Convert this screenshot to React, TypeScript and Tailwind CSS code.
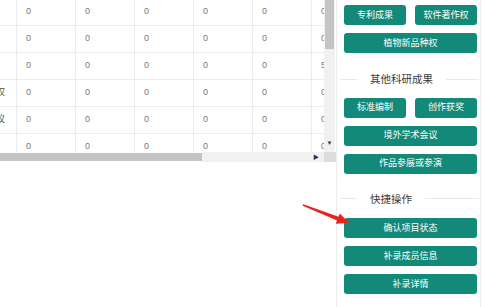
import React from 'react';

const font = { fontFamily: '"Liberation Sans", "Noto Sans CJK SC", sans-serif' };

const rows = [
  { name: '学术论文', vals: ['0', '0', '0', '0', '0', '0'] },
  { name: '学术专著', vals: ['0', '0', '0', '0', '0', '0'] },
  { name: '专利成果', vals: ['0', '0', '0', '0', '0', '5'] },
  { name: '植物新品种权', vals: ['0', '0', '0', '0', '0', '0'] },
  { name: '境外学术会议', vals: ['0', '0', '0', '0', '0', '0'] },
  { name: '标准编制', vals: ['0', '0', '0', '0', '0', '0'] },
];

function Btn({ children, full }: { children: React.ReactNode; full?: boolean }) {
  return (
    <button
      className={`h-[20px] rounded-[3px] bg-[#138a79] text-white text-[9px] leading-none flex items-center justify-center ${full ? 'w-full' : 'w-[62px]'}`}
    >
      {children}
    </button>
  );
}

function Divider({ title }: { title: string }) {
  return (
    <div className="flex items-center ml-[-4px] mr-[-2px]">
      <div className="w-[17px] h-px bg-[#e8e8e8]" />
      <span className="px-[13px] text-[10.5px] leading-none text-[#3a3a3a]">{title}</span>
      <div className="flex-1 h-px bg-[#e8e8e8]" />
    </div>
  );
}

export default function App() {
  return (
    <div className="relative w-[489px] h-[307px] overflow-hidden bg-white flex" style={font}>
      {/* table area, scrolled horizontally */}
      <div className="w-[336px] flex flex-col">
        <div className="flex h-[152px]">
          <div className="w-[324px] overflow-hidden">
            <div className="ml-[-55px] mt-[-1px]">
              {rows.map((r) => (
                <div key={r.name} className="flex h-[27px] border-b border-[#ececec]">
                  <div className="w-[72px] shrink-0 border-r border-[#ececec] pl-[6px] flex items-center text-[9px] text-[#555] whitespace-nowrap">
                    {r.name}
                  </div>
                  {r.vals.map((v, i) => (
                    <div
                      key={i}
                      className="w-[59px] shrink-0 border-r border-[#ececec] pl-[9px] flex items-center text-[9px] text-[#777]"
                    >
                      {v}
                    </div>
                  ))}
                </div>
              ))}
            </div>
          </div>
          {/* vertical scrollbar */}
          <div className="w-[11px] bg-[#f1f1f1] flex flex-col items-center">
            <div className="w-[9px] h-[49px] bg-[#c4c4c4]" />
            <div className="flex-1" />
            <div className="text-[6px] leading-none text-[#333] mb-[6px]">▼</div>
          </div>
        </div>
        {/* horizontal scrollbar */}
        <div className="flex h-[10px]">
          <div className="w-[202px] bg-[#c4c4c4] my-[1px]" />
          <div className="flex-1 bg-[#f1f1f1] flex items-center justify-end pr-[5px]">
            <span className="text-[6px] leading-none text-[#333]">▶</span>
          </div>
          <div className="w-[12px] bg-[#dcdcdc]" />
        </div>
      </div>

      {/* side panel */}
      <div className="w-[145px] border-l border-r border-[#ebebeb] pl-[7px] pr-[3px] pt-[5px] flex flex-col">
        <div className="flex justify-between">
          <Btn>专利成果</Btn>
          <Btn>软件著作权</Btn>
        </div>
        <div className="mt-[8px]">
          <Btn full>植物新品种权</Btn>
        </div>
        <div className="mt-[21px]">
          <Divider title="其他科研成果" />
        </div>
        <div className="mt-[13px] flex justify-between">
          <Btn>标准编制</Btn>
          <Btn>创作获奖</Btn>
        </div>
        <div className="mt-[8px]">
          <Btn full>境外学术会议</Btn>
        </div>
        <div className="mt-[8px]">
          <Btn full>作品参展或参演</Btn>
        </div>
        <div className="mt-[20px]">
          <Divider title="快捷操作" />
        </div>
        <div className="mt-[14px]">
          <Btn full>确认项目状态</Btn>
        </div>
        <div className="mt-[8px]">
          <Btn full>补录成员信息</Btn>
        </div>
        <div className="mt-[8px]">
          <Btn full>补录详情</Btn>
        </div>
      </div>

      {/* red annotation arrow */}
      <svg className="absolute left-0 top-0 pointer-events-none" width="489" height="307">
        <polygon
          points="302.7,205.7 303.3,204.3 338.5,216.7 339.8,213.5 349,223 335.8,223.7 337.1,220.5"
          fill="#e8231b"
        />
      </svg>
    </div>
  );
}
